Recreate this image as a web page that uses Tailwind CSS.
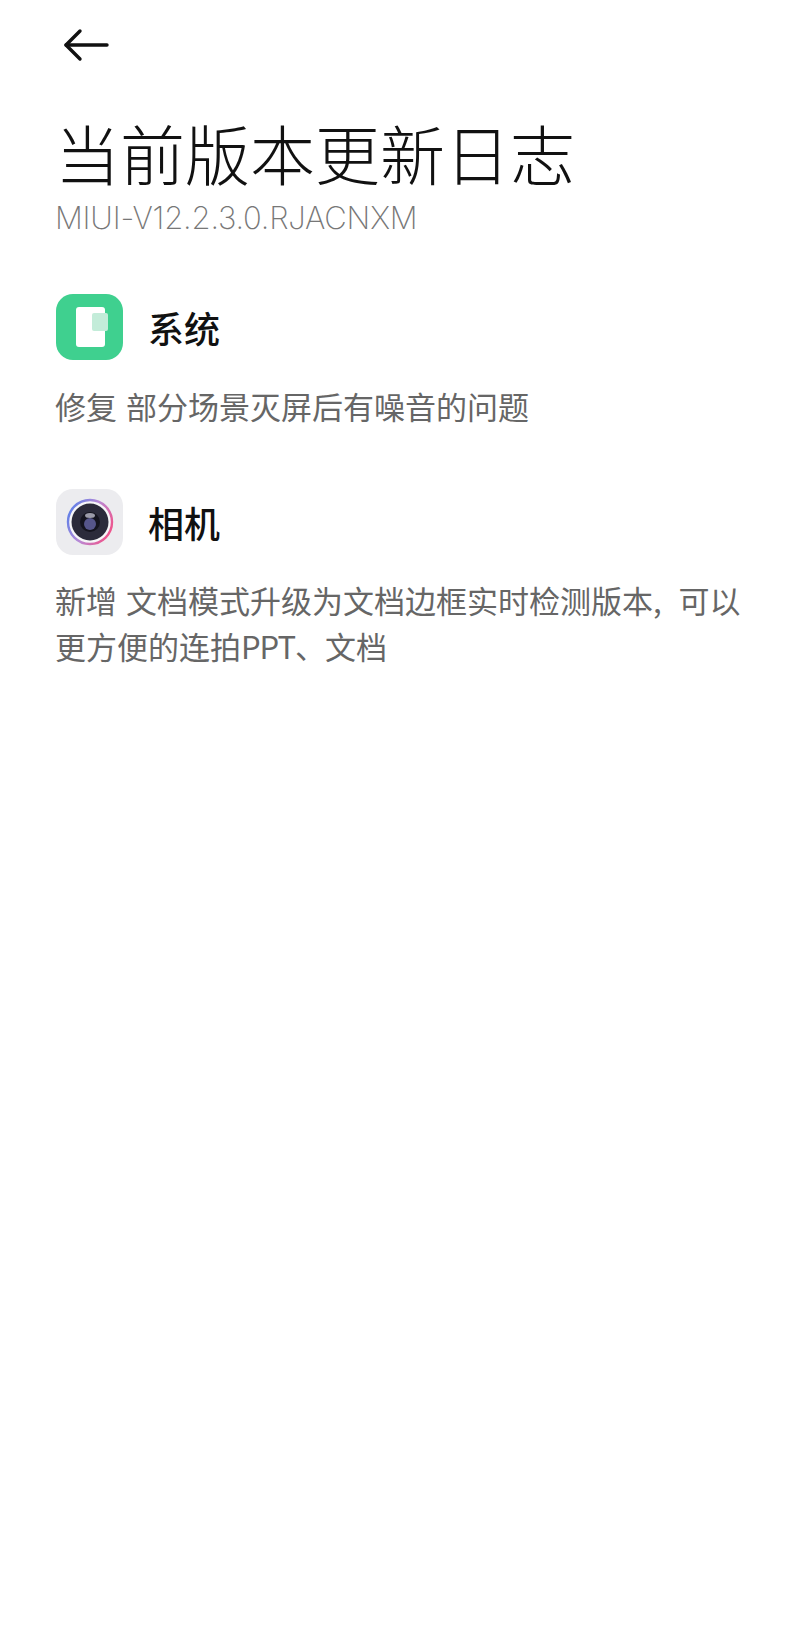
<!DOCTYPE html>
<html lang="zh-CN">
<head>
    <meta charset="UTF-8">
    <meta name="viewport" content="width=device-width, initial-scale=1.0">
    <title>当前版本更新日志</title>
    <script src="https://cdn.jsdelivr.net/npm/@tailwindcss/browser@4"></script>
</head>
<body class="bg-white h-[1634px] overflow-hidden font-['Noto_Sans_CJK_SC','Noto_Sans',sans-serif]">
    <div class="pl-[55px] pr-[55px]">
        <!-- Back -->
        <div class="pt-[28px] pl-[8px] h-[114px]">
            <svg width="46" height="34" viewBox="0 0 46 34" fill="none" stroke="#111" stroke-width="3.4" stroke-linecap="round" stroke-linejoin="round">
                <path d="M44 17H3"/>
                <path d="M17 3L3 17l14 14"/>
            </svg>
        </div>

        <!-- Title -->
        <h1 class="text-[65px] leading-[76px] font-light text-[#111] whitespace-nowrap">当前版本更新日志</h1>
        <p class="mt-[8px] text-[31px] leading-[40px] font-['Inter',sans-serif] font-extralight text-[#777] tracking-[-0.2px]">MIUI-V12.2.3.0.RJACNXM</p>

        <!-- 系统 -->
        <div class="mt-[56px]">
            <div class="flex items-center gap-[25px]">
                <div class="ml-[1px] w-[67px] h-[66px] rounded-[17px] bg-[#3fd08f]">
                    <svg width="67" height="66" viewBox="0 0 67 66">
                        <rect x="20" y="13" width="29" height="40" rx="3" fill="#fff"/>
                        <rect x="36" y="19" width="16" height="18" rx="2" fill="#c3ecd9"/>
                    </svg>
                </div>
                <span class="text-[36px] leading-[66px] font-medium text-[#111]">系统</span>
            </div>
            <p class="mt-[23px] text-[31px] leading-[46px] text-[#666] [word-spacing:2px]">修复 部分场景灭屏后有噪音的问题</p>
        </div>

        <!-- 相机 -->
        <div class="mt-[60px]">
            <div class="flex items-center gap-[25px]">
                <div class="ml-[1px] w-[67px] h-[66px] rounded-[17px] bg-[#ececef] flex items-center justify-center">
                    <svg width="50" height="50" viewBox="0 0 50 50" fill="none">
                        <defs>
                            <linearGradient id="ring" x1="0" y1="0.2" x2="1" y2="0.7">
                                <stop offset="0" stop-color="#5b7fe8"/>
                                <stop offset="0.5" stop-color="#b98ad6"/>
                                <stop offset="1" stop-color="#f0528a"/>
                            </linearGradient>
                        </defs>
                        <circle cx="25" cy="25" r="22" fill="#f6f6f8" stroke="url(#ring)" stroke-width="2.4"/>
                        <circle cx="25" cy="25" r="18.5" fill="#2b2b3b"/>
                        <circle cx="25" cy="25" r="10" fill="#14141f"/>
                        <circle cx="25" cy="27" r="6" fill="#55558a"/>
                        <ellipse cx="25" cy="18.5" rx="5" ry="2.5" fill="#9a9aa8"/>
                    </svg>
                </div>
                <span class="text-[36px] leading-[66px] font-medium text-[#111]">相机</span>
            </div>
            <p class="mt-[22px] text-[31px] leading-[46px] text-[#666] [word-spacing:2px]">新增 文档模式升级为文档边框实时检测版本<span class="mr-[8px]">,</span> 可以更方便的连拍<span class="tracking-[-1px]">PPT、</span>文档</p>
        </div>
    </div>
</body>
</html>
